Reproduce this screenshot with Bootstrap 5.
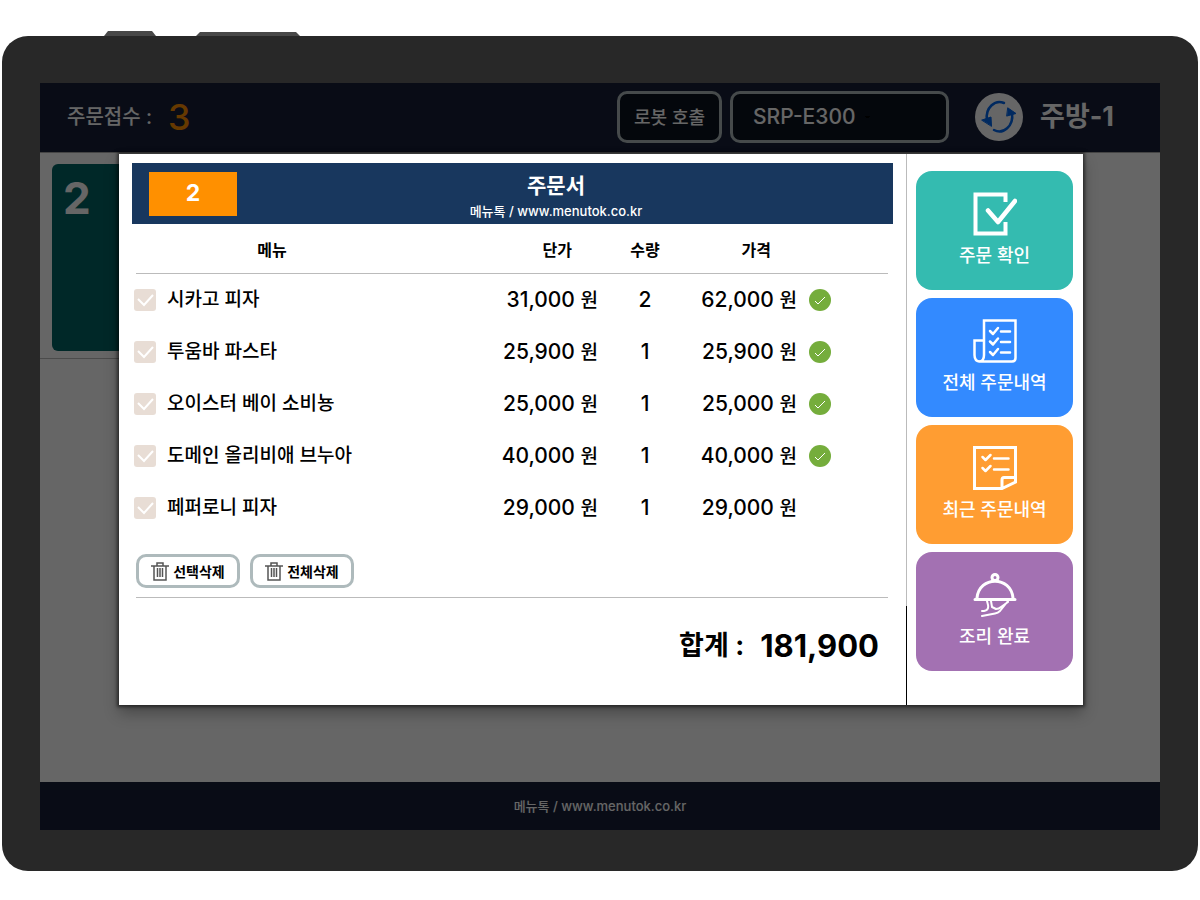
<!DOCTYPE html>
<html lang="ko">
<head>
<meta charset="utf-8">
<meta name="viewport" content="width=device-width, initial-scale=1">
<title>주문서</title>
<link href="https://cdn.jsdelivr.net/npm/bootstrap@5.3.0/dist/css/bootstrap.min.css" rel="stylesheet">
<style>
body { background: #fff; color: #000; font-family: Inter, "Noto Sans CJK KR", sans-serif; font-weight: 500; }
button, select { font-weight: 500; }
.device-keys { height: 36px; padding-left: 104px; gap: 40px; }
.key { background: #484848; height: 5px; width: 52px; clip-path: polygon(4px 0, calc(100% - 4px) 0, 100% 100%, 0 100%); }
.key-long { width: 104px; height: 4px; }
.device { background: #282828; border-radius: 26px; margin: 0 2px; padding: 47px 38px 41px; }
.screen { background: #fff; }
.navy { background: #172038; }
.topbar { height: 69px; padding: 0 46px 1px 27px; color: #fff; }
.received { font-size: 20px; line-height: 30px; }
.received-count { font-size: 36px; line-height: 40px; color: #ff9000; }
.outlined { border: 3px solid #aebabc; border-radius: 10px; }
.call-btn, .printer { background-color: #0b1220; color: #fff; height: 52px; }
.call-btn { width: 105px; font-size: 18px; }
.printer { width: 219px; padding: 0 20px; font-size: 21px; appearance: none;
  background-image: linear-gradient(45deg, transparent 50%, #000 50%), linear-gradient(-45deg, transparent 50%, #000 50%);
  background-size: 3px 3px; background-position: 132px 22px, 135px 22px; background-repeat: no-repeat; }
.refresh { width: 48px; height: 48px; margin-left: 18px; margin-right: 9px; background: #fff; }
.station { font-size: 27px; line-height: 30px; }
.stage { display: grid; border-top: 1px solid #aaa; }
.stage > * { grid-area: 1 / 1; }
.ticket-row { width: 200px; height: 206px; padding: 11px 12px 7px; border-bottom: 1px solid #bbb; }
.ticket { background: #006464; color: #fff; border-radius: 6px; padding: 8px 11px; font-size: 44px; line-height: 52px; }
.scrim { position: absolute; inset: 0; background: rgba(0, 0, 0, .6); z-index: 1; }
.dialog-sheet { z-index: 2; background: #fff; margin: 1px 77px 77px 79px; box-shadow: 0 0 3px 2px rgba(0, 0, 0, .5), 0 8px 14px rgba(0, 0, 0, .3); }
.sheet-head { height: 61px; margin: 9px 13px 0; padding: 0 18px 0 17px; background: #18375e; color: #fff; }
.order-no { width: 88px; height: 44px; background: #ff9000; font-size: 23px; }
.sheet-title { font-size: 21px; line-height: 26px; }
.site { font-size: 13px; line-height: 16px; }
.sheet-body { margin: 0 18px 0 17px; }
.order-table { table-layout: fixed; width: 100%; }
.order-table th { height: 49px; padding-top: 5px; font-size: 16px; line-height: 24px; border-bottom: 1px solid #bbb; }
.order-table td { height: 52px; font-size: 21px; line-height: 30px; padding: 2px 0 0; vertical-align: middle; white-space: nowrap; }
.order-table .item-name, .won { font-size: 19px; }
.w-unit { width: 190px; } .w-qty { width: 94px; } .w-price { width: 105px; } .w-state { width: 91px; }
.pe-head { padding-right: 26px; }
.pick { width: 22px; height: 22px; margin: 0 11px 0 -2px; flex: none; appearance: none; border-radius: 3px; background: #e8ddd5 url("data:image/svg+xml,%3Csvg xmlns='http://www.w3.org/2000/svg' viewBox='0 0 22 22'%3E%3Cpath d='M4 10l6 6 9-10' fill='none' stroke='%23fff' stroke-width='2'/%3E%3C/svg%3E"); }
.actions { padding: 21px 0 9px; gap: 10px; border-bottom: 1px solid #bbb; }
.trash-btn { width: 104px; height: 34px; background: #fff; font-size: 14px; color: #000; gap: 4px; }
.sum-row { height: 97px; padding-right: 9px; gap: 16px; font-size: 27px; }
.sum-value { font-size: 31px; }
.side { width: 177px; padding: 17px 10px 34px 9px; gap: 8px; border-left: 1px solid; border-image: linear-gradient(#bbb 82%, #000 82%) 1; }
.side-btn { height: 119px; border: 0; border-radius: 16px; color: #fff; font-size: 18px; line-height: 24px; gap: 8px; padding: 0 0 2px; }
.c-teal { background: #34bbb0; } .c-blue { background: #338aff; } .c-orange { background: #ff9d32; } .c-purple { background: #a371b2; }
.ico { fill: none; stroke: #fff; stroke-width: 3; stroke-linejoin: round; stroke-linecap: round; }
.page-foot { height: 48px; color: #fff; }
</style>
</head>
<body>
<div class="device-keys d-flex align-items-end"><span class="key"></span><span class="key key-long"></span></div>
<div class="device">
 <div class="screen position-relative">
  <header class="topbar navy d-flex align-items-center">
   <span class="received me-3">주문접수 :</span><span class="received-count">3</span>
   <div class="d-flex align-items-center gap-2 ms-auto">
    <button type="button" class="call-btn outlined p-0">로봇 호출</button>
    <select class="printer outlined" aria-label="프린터"><option>SRP-E300</option></select>
    <button type="button" class="refresh border-0 rounded-circle p-0" aria-label="새로고침">
     <svg class="d-block" width="48" height="48" viewBox="0 0 48 48" fill="none" stroke="#0066ee" stroke-width="2.500" stroke-linecap="round"><path d="M29 10C20 6 10 15 12 27M19 37c9 5 20-4 18-17"/><path d="M7 27l9-3 .5 9zM33 15l8 5.500-9 2.500z" fill="#0066ee" stroke-width="1"/></svg>
    </button>
    <strong class="station">주방-1</strong>
   </div>
  </header>
  <main class="stage">
   <section><div class="ticket-row"><div class="ticket fw-bold h-100">2</div></div></section>
   <section class="dialog-sheet position-relative d-flex" role="dialog" aria-label="주문서">
    <div class="flex-grow-1">
     <div class="sheet-head d-flex align-items-center">
      <div class="order-no d-flex align-items-center justify-content-center fw-bold">2</div>
      <div class="flex-grow-1 text-center pt-1"><h1 class="sheet-title fw-bold mb-1">주문서</h1><div class="site">메뉴톡 / www.menutok.co.kr</div></div>
     </div>
     <div class="sheet-body">
      <table class="order-table">
       <colgroup><col><col class="w-unit"><col class="w-qty"><col class="w-price"><col class="w-state"></colgroup>
       <thead><tr><th class="text-center">메뉴</th><th class="text-end pe-head">단가</th><th class="text-center">수량</th><th class="text-end pe-head">가격</th><th></th></tr></thead>
       <tbody>
        <tr><td><label class="item-name d-flex align-items-center"><input class="pick" type="checkbox">시카고 피자</label></td><td class="text-end">31,000 <span class="won">원</span></td><td class="text-center">2</td><td class="text-end">62,000 <span class="won">원</span></td><td class="ps-2"><svg class="ms-1 d-block" width="22" height="22" viewBox="0 0 22 22"><circle cx="11" cy="11" r="11" fill="#75ad3c"/><path d="M6 12l3 3 7-7" fill="none" stroke="#fff"/></svg></td></tr>
        <tr><td><label class="item-name d-flex align-items-center"><input class="pick" type="checkbox">투움바 파스타</label></td><td class="text-end">25,900 <span class="won">원</span></td><td class="text-center">1</td><td class="text-end">25,900 <span class="won">원</span></td><td class="ps-2"><svg class="ms-1 d-block" width="22" height="22" viewBox="0 0 22 22"><circle cx="11" cy="11" r="11" fill="#75ad3c"/><path d="M6 12l3 3 7-7" fill="none" stroke="#fff"/></svg></td></tr>
        <tr><td><label class="item-name d-flex align-items-center"><input class="pick" type="checkbox">오이스터 베이 소비뇽</label></td><td class="text-end">25,000 <span class="won">원</span></td><td class="text-center">1</td><td class="text-end">25,000 <span class="won">원</span></td><td class="ps-2"><svg class="ms-1 d-block" width="22" height="22" viewBox="0 0 22 22"><circle cx="11" cy="11" r="11" fill="#75ad3c"/><path d="M6 12l3 3 7-7" fill="none" stroke="#fff"/></svg></td></tr>
        <tr><td><label class="item-name d-flex align-items-center"><input class="pick" type="checkbox">도메인 올리비애 브누아</label></td><td class="text-end">40,000 <span class="won">원</span></td><td class="text-center">1</td><td class="text-end">40,000 <span class="won">원</span></td><td class="ps-2"><svg class="ms-1 d-block" width="22" height="22" viewBox="0 0 22 22"><circle cx="11" cy="11" r="11" fill="#75ad3c"/><path d="M6 12l3 3 7-7" fill="none" stroke="#fff"/></svg></td></tr>
        <tr><td><label class="item-name d-flex align-items-center"><input class="pick" type="checkbox">페퍼로니 피자</label></td><td class="text-end">29,000 <span class="won">원</span></td><td class="text-center">1</td><td class="text-end">29,000 <span class="won">원</span></td><td></td></tr>
       </tbody>
      </table>
      <div class="actions d-flex">
       <button type="button" class="trash-btn outlined d-flex align-items-center justify-content-center fw-bold p-0"><svg width="18" height="19" viewBox="0 0 18 19" fill="none" stroke="#555" stroke-width="1.500"><path d="M0 4h18M6 3.500V1h6v2.500M3 4v14h12V4M6.500 6v9M9 6v9M11.500 6v9"/></svg>선택삭제</button>
       <button type="button" class="trash-btn outlined d-flex align-items-center justify-content-center fw-bold p-0"><svg width="18" height="19" viewBox="0 0 18 19" fill="none" stroke="#555" stroke-width="1.500"><path d="M0 4h18M6 3.500V1h6v2.500M3 4v14h12V4M6.500 6v9M9 6v9M11.500 6v9"/></svg>전체삭제</button>
      </div>
      <div class="sum-row d-flex align-items-center justify-content-end fw-bold"><span>합계 :</span><span class="sum-value">181,900</span></div>
     </div>
    </div>
    <nav class="side d-flex flex-column flex-shrink-0" aria-label="주문 작업">
     <button type="button" class="side-btn c-teal d-flex flex-column align-items-center justify-content-center"><svg class="ico" width="44" height="44" viewBox="0 0 44 44"><path d="M32.500 10V2.500h-30v39h30V30" stroke-width="4" stroke-linejoin="miter" stroke-linecap="butt"/><path d="M15 18.500L25 30 42 9" stroke-width="4.500"/></svg>주문 확인</button>
     <button type="button" class="side-btn c-blue d-flex flex-column align-items-center justify-content-center"><svg class="ico" width="44" height="44" viewBox="0 0 44 44"><path d="M11 34V1.500h31.500V39q0 3.500-3.500 3.500H7Q1.500 42.500 1.500 36V21.500H11V36q0 6.500-5 6.500" stroke-width="2.500" stroke-linejoin="miter"/><path d="M17 12l3 3 5-6M17 22.500l3 3 5-6M17 33l3 3 5-6M28 12.500h9M28 23h9M28 33.500h9" stroke-width="2.500"/></svg>전체 주문내역</button>
     <button type="button" class="side-btn c-orange d-flex flex-column align-items-center justify-content-center"><svg class="ico" width="44" height="44" viewBox="0 0 44 44"><path d="M1.500 1.500h41V36L29 42.500H1.500zM29 42V34q0-2.500 2-2.500h11" stroke-linejoin="miter"/><path d="M9.500 11l3 3 5-5M9.500 22l3 3 5-5M21 12.500h14.500M21 23.500h14.500" stroke-width="2.500"/></svg>최근 주문내역</button>
     <button type="button" class="side-btn c-purple d-flex flex-column align-items-center justify-content-center"><svg class="ico" width="44" height="44" viewBox="0 0 44 44"><circle cx="22" cy="4.500" r="3"/><path d="M2 26.500h40M4 25C6 2.500 38 2.500 40 25"/><path d="M9 38h2q5-1 4-6l-1-4M18 28l1 6 4 2q3 0 5-2l7-5M35 28l-8 10q-2 2-5 2.500L9 43" stroke-width="2"/></svg>조리 완료</button>
    </nav>
   </section>
  </main>
  <footer class="page-foot site navy d-flex align-items-center justify-content-center">메뉴톡 / www.menutok.co.kr</footer>
  <div class="scrim"></div>
 </div>
</div>
<script src="https://cdn.jsdelivr.net/npm/bootstrap@5.3.0/dist/js/bootstrap.bundle.min.js"></script>
</body>
</html>
